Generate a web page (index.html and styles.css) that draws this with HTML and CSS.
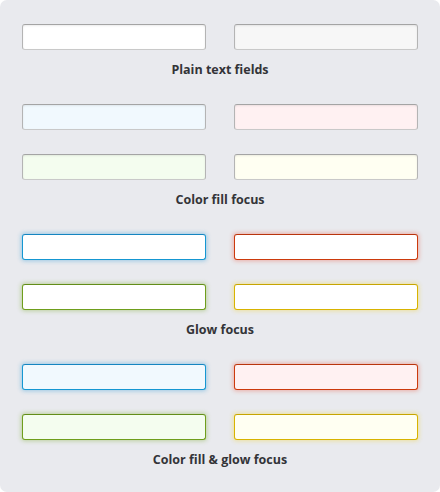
FILE: index.html
```html
<!DOCTYPE html>
<html>
<head>
<meta charset="utf-8">
<link rel="stylesheet" href="styles.css">
</head>
<body>
<div class="panel">
  <section class="group">
    <div class="grid">
      <input class="field" type="text">
      <input class="field gray" type="text">
    </div>
    <h3 class="label">Plain text fields</h3>
  </section>
  <section class="group">
    <div class="grid">
      <input class="field fill-blue" type="text">
      <input class="field fill-red" type="text">
      <input class="field fill-green" type="text">
      <input class="field fill-yellow" type="text">
    </div>
    <h3 class="label">Color fill focus</h3>
  </section>
  <section class="group">
    <div class="grid">
      <input class="field glow-blue" type="text">
      <input class="field glow-red" type="text">
      <input class="field glow-green" type="text">
      <input class="field glow-yellow" type="text">
    </div>
    <h3 class="label">Glow focus</h3>
  </section>
  <section class="group">
    <div class="grid">
      <input class="field glow-blue fill-blue" type="text">
      <input class="field glow-red fill-red" type="text">
      <input class="field glow-green fill-green" type="text">
      <input class="field glow-yellow fill-yellow" type="text">
    </div>
    <h3 class="label">Color fill &amp; glow focus</h3>
  </section>
</div>
</body>
</html>
```
FILE: styles.css
```css
html, body {
  margin: 0;
  padding: 0;
  background: #ffffff;
}
.panel {
  width: 440px;
  height: 492px;
  box-sizing: border-box;
  background: #e9eaee;
  border-radius: 7px;
  padding: 24px 0 0 22px;
}
.group {
  margin-bottom: 26px;
}
.grid {
  display: grid;
  grid-template-columns: 184px 184px;
  column-gap: 28px;
  row-gap: 24px;
}
.field {
  display: block;
  width: 184px;
  height: 26px;
  box-sizing: border-box;
  margin: 0;
  padding: 0 6px;
  border: 1px solid #b4b4b4;
  border-top-color: #a4a4a4;
  border-bottom-color: #c9c9c9;
  border-radius: 3px;
  background: #ffffff;
  box-shadow: inset 0 1px 2px rgba(0, 0, 0, 0.08);
  outline: none;
}
.gray { background: #f7f7f7; }
.fill-blue { background: #f1f9fe; }
.fill-red { background: #fff1f2; }
.fill-green { background: #f4fdef; }
.fill-yellow { background: #fffff2; }
.glow-blue {
  border: 1px solid #1597d2;
  border-top-color: #1585c0;
  box-shadow: 0 0 4px 1px rgba(60, 160, 215, 0.45);
}
.glow-red {
  border: 1px solid #cc3a0c;
  border-top-color: #b8340c;
  box-shadow: 0 0 4px 1px rgba(235, 100, 80, 0.45);
}
.glow-green {
  border: 1px solid #6f9e1c;
  border-top-color: #628d18;
  box-shadow: 0 0 4px 1px rgba(130, 175, 60, 0.45);
}
.glow-yellow {
  border: 1px solid #d8b300;
  border-top-color: #c6a400;
  box-shadow: 0 0 4px 1px rgba(240, 210, 60, 0.45);
}
.label {
  margin: 12px 0 0 0;
  width: 396px;
  text-align: center;
  font-family: "Open Sans", sans-serif;
  font-weight: 700;
  font-size: 12.5px;
  line-height: 16px;
  color: #333438;
}
```
